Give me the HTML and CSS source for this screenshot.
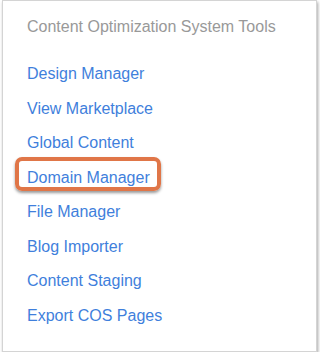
FILE: index.html
```html
<!DOCTYPE html>
<html lang="en">
<head>
  <meta charset="UTF-8">
  <meta name="viewport" content="width=device-width, initial-scale=1.0">
  <title>COS Tools</title>
  <link rel="stylesheet" href="styles.css">
</head>
<body>

<div class="tools-card">
  <h2 class="tools-title">Content Optimization System Tools</h2>
  <ul class="tools-list">
    <li><a href="#">Design Manager</a></li>
    <li><a href="#">View Marketplace</a></li>
    <li><a href="#">Global Content</a></li>
    <li><a href="#" class="highlight">Domain Manager</a></li>
    <li><a href="#">File Manager</a></li>
    <li><a href="#">Blog Importer</a></li>
    <li><a href="#">Content Staging</a></li>
    <li><a href="#">Export COS Pages</a></li>
  </ul>
</div>

</body>
</html>
```

FILE: styles.css
```css
/* Base */
body {
  margin: 0;
  padding: 0;
  background-color: #fff;
  font-family: 'Liberation Sans', Arial, sans-serif;
}

/* Card */
.tools-card {
  margin: 0 2px 0 2px;
  width: 315px;
  height: 352px;
  box-sizing: border-box;
  padding: 17px 24px 0 24px;
  background-color: #fff;
  border: 1px solid #d4d4d4;
  box-shadow: 1px 2px 3px rgba(0, 0, 0, 0.35);
}

.tools-title {
  margin: 0 0 21px 0;
  font-size: 16px;
  font-weight: normal;
  line-height: 18px;
  color: #999;
}

.tools-list {
  list-style: none;
  margin: 0;
  padding: 0;
}

.tools-list li {
  font-size: 16px;
  line-height: 34.5px;
}

.tools-list a {
  color: #3f7fdc;
  text-decoration: none;
}

/* Orange annotation around a link */
.tools-list a.highlight {
  position: relative;
}

.tools-list a.highlight::after {
  content: "";
  position: absolute;
  top: -12px;
  bottom: -5px;
  left: -12px;
  right: -11px;
  border: 4px solid #e07648;
  border-radius: 7px;
  box-shadow: 0 2px 3px rgba(0, 0, 0, 0.4);
}
```
